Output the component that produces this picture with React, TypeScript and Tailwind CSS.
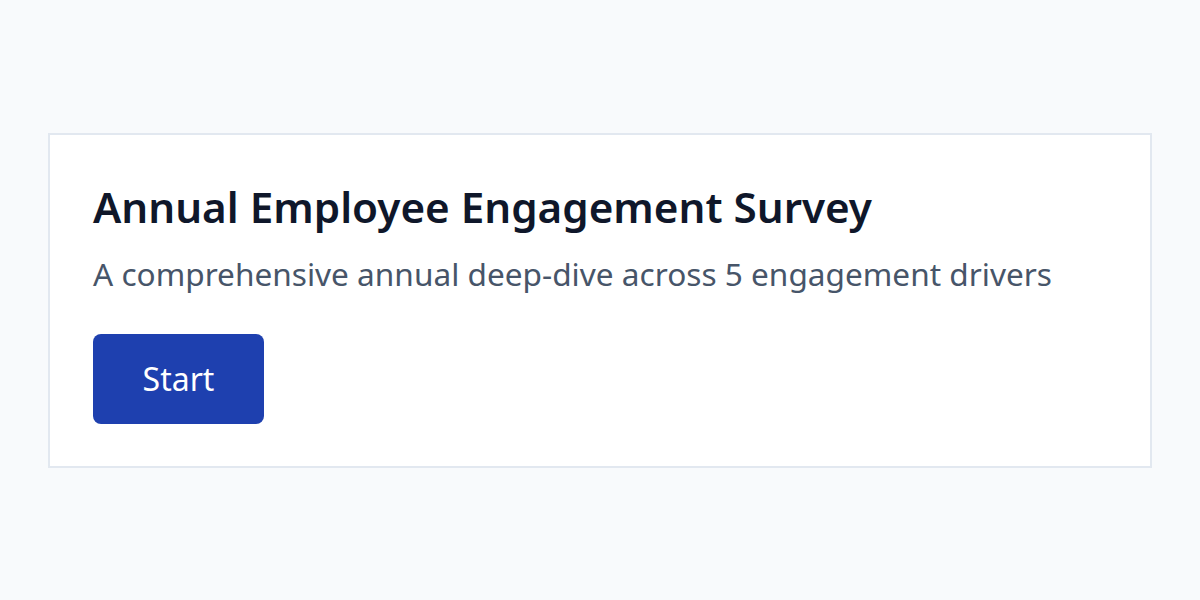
export default function App() {
  return (
    <div
      className="w-[1200px] h-[600px] bg-[#f8fafc] flex items-center px-12"
      style={{ fontFamily: '"Noto Sans", "Open Sans", sans-serif' }}
    >
      <div className="w-full border-2 border-[#e2e8f0] bg-white px-[43px] pt-[42px] pb-[42px]">
        <h1 className="text-[42.2px] leading-[60px] font-semibold text-[#0f172a]">
          Annual Employee Engagement Survey
        </h1>
        <p className="mt-[17px] text-[31.6px] leading-[40px] text-[#475569]">
          A comprehensive annual deep-dive across 5 engagement drivers
        </p>
        <button className="mt-[40px] w-[171px] h-[90px] rounded-lg bg-[#1e40af] text-white text-[32px] leading-[40px] flex items-center justify-center">
          Start
        </button>
      </div>
    </div>
  );
}
